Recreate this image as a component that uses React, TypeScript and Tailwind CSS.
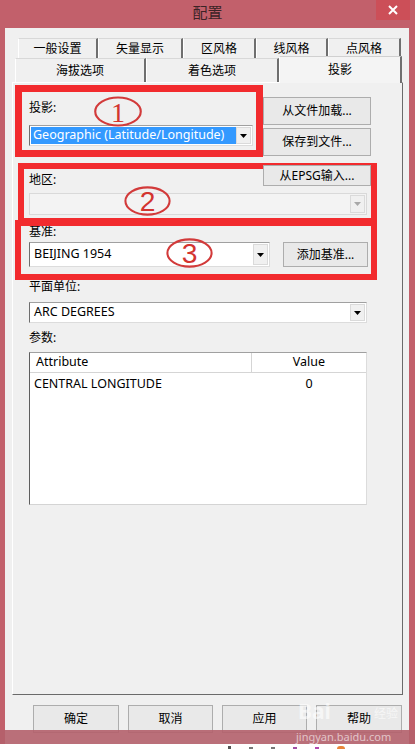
import React from "react";

const font = "font-['Noto_Sans','Noto_Sans_CJK_SC',sans-serif]";

function Arrow({ disabled }: { disabled?: boolean }) {
  return (
    <div className="flex w-[15px] items-center justify-center border border-[#dadada] bg-[#f0f0f0]">
      <svg width="7" height="4" viewBox="0 0 7 4">
        <path d="M0 0h7L3.5 4z" fill={disabled ? "#a8a8a8" : "#000"} />
      </svg>
    </div>
  );
}

function Btn({ children, className }: { children: React.ReactNode; className: string }) {
  return (
    <div className={`flex items-center justify-center border border-[#adadad] bg-[#e9e9e9] text-[12px] text-black ${className}`}>
      {children}
    </div>
  );
}

function Circled({ n, serif, className }: { n: string; serif?: boolean; className: string }) {
  return (
    <svg className={`absolute ${className}`} viewBox="0 0 50 32">
      <ellipse cx="25" cy="16" rx="23.5" ry="14.5" fill="none" stroke="#d23a3a" strokeWidth="2.2" />
      <text
        x="25"
        y="26.5"
        textAnchor="middle"
        fontSize={serif ? 29 : 30}
        fill="#d3342f"
        fontFamily={serif ? "Liberation Serif, serif" : "Liberation Sans, sans-serif"}
      >
        {n}
      </text>
    </svg>
  );
}

export default function App() {
  const tabs1 = [
    ["一般设置", "w-[80px]"],
    ["矢量显示", "w-[85px]"],
    ["区风格", "w-[73px]"],
    ["线风格", "w-[72px]"],
    ["点风格", "w-[73px]"],
  ];
  const tabs2 = [
    ["海拔选项", "w-[131px]"],
    ["着色选项", "w-[133px]"],
  ];

  return (
    <div className={`relative h-[749px] w-[415px] overflow-hidden bg-[#c2606b] ${font}`}>
      {/* title bar */}
      <div className="relative flex h-[28px] items-center justify-center pb-[4px]">
        <span className="text-[15px] text-[#3b2326]">配置</span>
        <div className="absolute right-[5px] top-0 flex h-[20px] w-[34px] items-center justify-center bg-[#cc4f58]">
          <svg width="10" height="10" viewBox="0 0 10 10">
            <path d="M1 1l8 8M9 1l-8 8" stroke="#fff" strokeWidth="2" />
          </svg>
        </div>
      </div>

      {/* client */}
      <div className="ml-[5px] h-[716px] w-[404px] bg-[#f0f0f0] pt-[10px]">
        <div className="ml-[13px] flex h-[20px]">
          {tabs1.map(([t, w]) => (
            <div
              key={t}
              className={`flex items-center justify-center border-t border-l border-r-2 border-t-[#d8d8d8] border-l-white border-r-[#6f6f6f] text-[12px] text-black ${w}`}
            >
              {t}
            </div>
          ))}
        </div>
        <div className="ml-[10px] flex h-[24px]">
          {tabs2.map(([t, w]) => (
            <div
              key={t}
              className={`flex items-center justify-center border-t border-l border-r-2 border-t-[#d8d8d8] border-l-white border-r-[#6f6f6f] text-[12px] text-black ${w}`}
            >
              {t}
            </div>
          ))}
          <div className="relative z-10 -mt-[2px] flex h-[27px] w-[123px] items-start justify-center border-t border-l border-r-2 border-t-[#d0d0d0] border-l-white border-r-[#6f6f6f] bg-[#f4f4f4] pt-[4px] text-[12px] text-black">
            投影
          </div>
        </div>

        {/* tab panel */}
        <div className="ml-[7px] h-[613px] w-[391px] border border-t-white border-l-white border-r-[#6a6a6a] border-b-[#6a6a6a] bg-[#f0f0f0] pl-[16px]">
          <div className="mt-[14px] flex">
            <div className="w-[224px]">
              <div className="mt-[3px] h-[16px] text-[12px] leading-[16px] text-black">投影:</div>
              <div className="mt-[9px] flex h-[21px] border border-t-[#a0a0a0] border-l-[#6e6e6e] border-r-[#dcdcdc] border-b-[#dcdcdc] bg-white p-[1px]">
                <div className="flex flex-1 items-center bg-[#3399ff] pl-[2px] text-[12.5px] text-white">
                  Geographic (Latitude/Longitude)
                </div>
                <Arrow />
              </div>
              <div className="mt-[26px] h-[16px] text-[12px] leading-[16px] text-black">地区:</div>
            </div>
            <div className="ml-[10px] flex flex-col">
              <Btn className="h-[28px] w-[108px]">从文件加载...</Btn>
              <Btn className="mt-[3px] h-[28px] w-[108px]">保存到文件...</Btn>
              <Btn className="relative z-10 mt-[9px] h-[21px] w-[108px]">从EPSG输入...</Btn>
            </div>
          </div>

          <div className="mt-[5px] flex h-[22px] w-[338px] border border-[#d9d9d9] bg-[#f3f3f3] p-[1px]">
            <div className="flex-1" />
            <Arrow disabled />
          </div>

          <div className="mt-[9px] h-[16px] text-[12px] leading-[16px] text-black">基准:</div>
          <div className="mt-[2px] flex">
            <div className="flex h-[25px] w-[241px] border border-t-[#a0a0a0] border-l-[#6e6e6e] border-r-[#dcdcdc] border-b-[#dcdcdc] bg-white p-[1px]">
              <div className="flex flex-1 items-center pl-[3px] text-[12.5px] text-black">BEIJING 1954</div>
              <Arrow />
            </div>
            <Btn className="ml-[13px] h-[25px] w-[85px]">添加基准...</Btn>
          </div>

          <div className="mt-[12px] h-[16px] text-[12px] leading-[16px] text-black">平面单位:</div>
          <div className="mt-[7px] flex h-[21px] w-[338px] border border-t-[#a0a0a0] border-l-[#6e6e6e] border-r-[#dcdcdc] border-b-[#dcdcdc] bg-white p-[1px]">
            <div className="flex flex-1 items-center pl-[3px] text-[12.5px] text-black">ARC DEGREES</div>
            <Arrow />
          </div>

          <div className="mt-[7px] h-[16px] text-[12px] leading-[16px] text-black">参数:</div>
          <div className="mt-[6px] h-[153px] w-[338px] border border-t-[#a0a0a0] border-l-[#5e5e5e] border-r-[#dcdcdc] border-b-[#d4d4d4] bg-white">
            <div className="flex h-[20px] border-b border-[#d5d5d5] text-[12.5px] text-black">
              <div className="flex w-[222px] items-center border-r border-[#d5d5d5] pl-[6px]">Attribute</div>
              <div className="flex flex-1 items-center justify-center">Value</div>
            </div>
            <div className="flex h-[22px] text-[12.5px] text-black">
              <div className="flex w-[222px] items-center pl-[4px]">CENTRAL LONGITUDE</div>
              <div className="flex flex-1 items-center justify-center">0</div>
            </div>
          </div>
        </div>

        {/* dialog buttons */}
        <div className="ml-[28px] mt-[10px] flex gap-[9px]">
          <Btn className="h-[28px] w-[86px] border-[#5a5a5a]">确定</Btn>
          <Btn className="h-[28px] w-[85px]">取消</Btn>
          <Btn className="h-[28px] w-[85px]">应用</Btn>
          <Btn className="h-[28px] w-[86px]">帮助</Btn>
        </div>
      </div>

      {/* taskbar strip */}
      <div className="flex h-[5px] items-end gap-[18px] bg-white pl-[228px]">
        <div className="h-[3px] w-[3px] bg-[#555]" />
        <div className="h-[2px] w-[4px] bg-[#777]" />
        <div className="h-[2px] w-[4px] bg-[#777]" />
        <div className="h-[2px] w-[4px] bg-[#a04fa4]" />
        <div className="h-[2px] w-[4px] bg-[#b04ab0]" />
        <div className="h-[3px] w-[8px] rounded-t-full bg-[#e8853a]" />
      </div>

      {/* pink band over the bottom */}
      <div className="absolute left-0 top-[730px] h-[14px] w-[415px] bg-[#b4606b]/90" />

      {/* watermark */}
      <div className="absolute left-[298px] top-[701px] text-[21px] font-bold leading-none text-white/60">Bai</div>
      <div className="absolute left-[374px] top-[708px] text-[12px] leading-none text-white/60">经验</div>
      <div className="absolute left-[296px] top-[731px] text-[11px] leading-none text-white/60">jingyan.baidu.com</div>

      {/* annotations */}
      <div className="absolute left-[15px] top-[85px] h-[72px] w-[248px] border-[7px] border-[#f22b2e]" />
      <div className="absolute left-[18px] top-[163px] h-[61px] w-[359px] border-[6px] border-[#f22b2e]" />
      <div className="absolute left-[15px] top-[220px] h-[60px] w-[362px] border-[6px] border-[#f22b2e]" />
      <Circled n="1" serif className="left-[92px] top-[96px] h-[31px] w-[52px]" />
      <Circled n="2" className="left-[124px] top-[183px] h-[36px] w-[47px]" />
      <Circled n="3" className="left-[166px] top-[237px] h-[32px] w-[47px]" />
    </div>
  );
}
